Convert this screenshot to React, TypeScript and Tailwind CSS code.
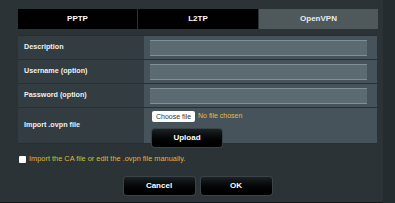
const rows = ['Description', 'Username (option)', 'Password (option)']

function Btn({ label, w }: { label: string; w: string }) {
  return (
    <button
      className={`${w} h-[18px] rounded-[3px] bg-gradient-to-b from-[#1d2224] to-[#000000] text-white text-[8px] font-bold shadow-[0_0_0_1px_#3a4448]`}
    >
      {label}
    </button>
  )
}

export default function App() {
  return (
    <div
      className="w-[395px] h-[203px] bg-[#2b3336] overflow-hidden flex"
      style={{ fontFamily: '"Liberation Sans", Arial, sans-serif' }}
    >
      <div className="w-[383px] flex flex-col border-b border-[#15191b]">
        {/* Tabs */}
        <div className="ml-[18px] mt-[9px] w-[360px] h-[20px] flex gap-px text-[8px] font-bold text-white">
          <div className="w-[119px] bg-black flex items-center justify-center">PPTP</div>
          <div className="w-[120px] bg-black flex items-center justify-center">L2TP</div>
          <div className="flex-1 bg-[#4f585b] flex items-center justify-center text-[#e8ecee]">OpenVPN</div>
        </div>

        {/* Form table */}
        <div className="ml-[18px] mt-[6px] w-[359px] flex flex-col bg-[#333c40] border-y border-[#262e31]">
          {rows.map((r) => (
            <div key={r} className="h-[24px] flex border-b border-[#283034]">
              <div className="w-[126px] pl-[6px] flex items-center text-[7.2px] font-bold text-[#eef1f2]">{r}</div>
              <div className="flex-1 bg-[#46535a] flex items-center pl-[6px]">
                <div className="w-[217px] h-[16px] bg-[#5b6b71] border-t border-[#7f9096] border-b border-[#4c5a60]" />
              </div>
            </div>
          ))}
          <div className="h-[35px] flex">
            <div className="w-[126px] pl-[6px] flex items-center text-[7.2px] font-bold text-[#eef1f2]">Import .ovpn file</div>
            <div className="flex-1 bg-[#46535a] pl-[8px] pt-[3px] flex flex-col items-start">
              <div className="flex items-center gap-[3px]">
                <div className="h-[11px] px-[4px] bg-white rounded-[2px] text-[7px] text-[#333] leading-[11px]">Choose file</div>
                <span className="text-[7px] text-[#e0be3e]">No file chosen</span>
              </div>
              <div className="mt-[1px]">
                <Btn label="Upload" w="w-[70px]" />
              </div>
            </div>
          </div>
        </div>

        {/* Checkbox */}
        <div className="ml-[19px] mt-[10px] h-[10px] flex items-center gap-[3px]">
          <div className="w-[7px] h-[7px] bg-white rounded-[1px]" />
          <span className="text-[7.4px] text-[#dcbb3c]">Import the CA file or edit the .ovpn file manually.</span>
        </div>

        {/* Actions */}
        <div className="mt-[13px] flex justify-center gap-[6px] pl-[12px]">
          <Btn label="Cancel" w="w-[71px]" />
          <Btn label="OK" w="w-[71px]" />
        </div>
      </div>
      <div className="flex-1 bg-[#252c2f]" />
    </div>
  )
}
